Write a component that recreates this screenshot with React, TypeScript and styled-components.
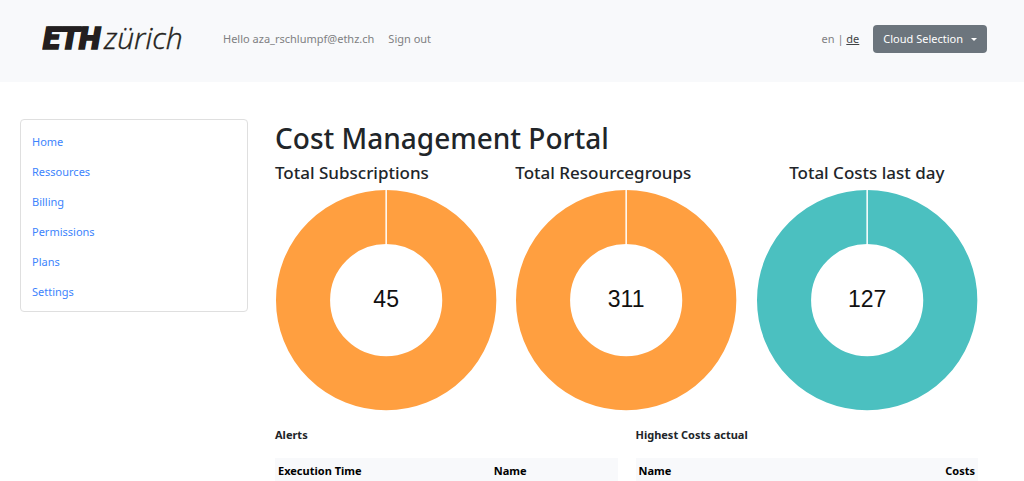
import React from "react";
import styled, { createGlobalStyle } from "styled-components";

const GlobalStyle = createGlobalStyle`
  *, *::before, *::after { box-sizing: border-box; }
  body {
    margin: 0;
    background: #fff;
    color: #212529;
    font-family: "Segoe UI", "Noto Sans", "Open Sans", sans-serif;
    font-size: 11px;
    line-height: 18px;
  }
`;

const Header = styled.header`
  display: flex;
  align-items: center;
  height: 82px;
  padding: 0 37px 4px 42px;
  background: #f8f9fb;
`;

const LogoLink = styled.a`
  display: block;
  margin-right: 31px;
  svg { display: block; }
`;

const AccountNav = styled.nav`
  display: flex;
  gap: 14px;
  color: #7f8082;
`;

const NavLink = styled.a`
  color: inherit;
  text-decoration: none;
`;

const Languages = styled.div`
  margin-left: auto;
  color: #7f8082;
`;

const LanguageLink = styled.a<{ $active?: boolean }>`
  color: ${(p) => (p.$active ? "#3f4245" : "inherit")};
  text-decoration: ${(p) => (p.$active ? "underline" : "none")};
`;

const CloudButton = styled.button`
  display: flex;
  align-items: center;
  gap: 8px;
  height: 28px;
  margin-left: 14px;
  padding: 0 10px;
  border: 0;
  border-radius: 4px;
  background: #6c757d;
  color: #fff;
  font: inherit;
  cursor: pointer;
`;

const Caret = styled.span`
  border-top: 3px solid currentColor;
  border-left: 3px solid transparent;
  border-right: 3px solid transparent;
`;

const Page = styled.div`
  display: grid;
  grid-template-columns: 228fr 703fr;
  gap: 27px;
  align-items: start;
  padding: 37px 46px 0 20px;
`;

const Sidebar = styled.nav`
  padding: 7px 11px 4px;
  border: 1px solid #dfdfdf;
  border-radius: 4px;
`;

const MenuList = styled.ul`
  margin: 0;
  padding: 0;
  list-style: none;
`;

const MenuLink = styled.a`
  display: block;
  padding: 6px 0;
  color: #3d84fd;
  text-decoration: none;
`;

const Title = styled.h1`
  margin: 0;
  font-size: 28px;
  font-weight: 500;
  line-height: 38px;
`;

const Charts = styled.section`
  display: grid;
  grid-template-columns: repeat(3, 1fr);
  gap: 18px;
  margin-top: 2px;
`;

const ChartTitle = styled.h2<{ $centered?: boolean }>`
  margin: 0 0 2px;
  font-size: 17px;
  font-weight: 500;
  line-height: 28px;
  white-space: nowrap;
  text-align: ${(p) => (p.$centered ? "center" : "left")};
`;

const DonutSvg = styled.svg`
  display: block;
  width: 100%;
  height: auto;
  text {
    font-family: "Liberation Sans", Arial, sans-serif;
    font-size: 23px;
    fill: #111;
  }
`;

const Tables = styled.section`
  display: grid;
  grid-template-columns: repeat(2, 1fr);
  gap: 18px;
  margin-top: 15px;
`;

const TableTitle = styled.h3`
  margin: 0 0 14px;
  font-size: 11px;
  font-weight: 700;
  line-height: 18px;
`;

const DataTable = styled.table`
  width: 100%;
  border-collapse: collapse;
  table-layout: fixed;
  background: #f8f9fb;
  color: #000;
`;

const HeadCell = styled.th<{ $width?: string; $end?: boolean }>`
  width: ${(p) => p.$width ?? "auto"};
  padding: 4px 3px;
  line-height: 18px;
  text-align: ${(p) => (p.$end ? "right" : "left")};
`;

const Logo = () => (
  <svg width="150" height="48" viewBox="0 0 150 48" role="img" aria-label="ETH zürich">
    <g fill="#231f20" stroke="#231f20" fontStyle="italic">
      <text x="1" y="34" fontFamily="Roboto, sans-serif" fontWeight="900" fontSize="31" strokeWidth="1.6">ETH</text>
      <line x1="6" y1="14" x2="46" y2="14" strokeWidth="5" />
      <text x="62" y="34" fontFamily="'Open Sans', sans-serif" fontWeight="300" fontSize="30" strokeWidth="0.4">zürich</text>
    </g>
  </svg>
);

type DonutProps = { title: string; value: number; color: string; centered?: boolean };

const Donut = ({ title, value, color, centered }: DonutProps) => (
  <div>
    <ChartTitle $centered={centered}>{title}</ChartTitle>
    <DonutSvg viewBox="0 0 222 222" role="img" aria-label={`${title}: ${value}`}>
      <circle cx="111" cy="111" r="83" fill="none" stroke={color} strokeWidth="54" />
      <line x1="111" y1="0" x2="111" y2="56" stroke="#fff" strokeWidth="1.5" />
      <text x="111" y="118" textAnchor="middle">{value}</text>
    </DonutSvg>
  </div>
);

const MENU = ["Home", "Ressources", "Billing", "Permissions", "Plans", "Settings"];

export default function App() {
  return (
    <>
      <GlobalStyle />
      <Header>
        <LogoLink href="#"><Logo /></LogoLink>
        <AccountNav>
          <NavLink href="#account">Hello aza_rschlumpf@ethz.ch</NavLink>
          <NavLink href="#signout">Sign out</NavLink>
        </AccountNav>
        <Languages>
          <LanguageLink href="#en">en</LanguageLink> | <LanguageLink href="#de" $active>de</LanguageLink>
        </Languages>
        <CloudButton type="button" aria-haspopup="menu">Cloud Selection <Caret /></CloudButton>
      </Header>
      <Page>
        <Sidebar>
          <MenuList>
            {MENU.map((item) => (
              <li key={item}><MenuLink href={`#${item.toLowerCase()}`}>{item}</MenuLink></li>
            ))}
          </MenuList>
        </Sidebar>
        <main>
          <Title>Cost Management Portal</Title>
          <Charts>
            <Donut title="Total Subscriptions" value={45} color="#ff9f40" />
            <Donut title="Total Resourcegroups" value={311} color="#ff9f40" />
            <Donut title="Total Costs last day" value={127} color="#4bc0c0" centered />
          </Charts>
          <Tables>
            <div>
              <TableTitle id="alerts">Alerts</TableTitle>
              <DataTable aria-labelledby="alerts">
                <thead>
                  <tr>
                    <HeadCell scope="col" $width="63%">Execution Time</HeadCell>
                    <HeadCell scope="col">Name</HeadCell>
                  </tr>
                </thead>
              </DataTable>
            </div>
            <div>
              <TableTitle id="costs">Highest Costs actual</TableTitle>
              <DataTable aria-labelledby="costs">
                <thead>
                  <tr>
                    <HeadCell scope="col">Name</HeadCell>
                    <HeadCell scope="col" $end>Costs</HeadCell>
                  </tr>
                </thead>
              </DataTable>
            </div>
          </Tables>
        </main>
      </Page>
    </>
  );
}
